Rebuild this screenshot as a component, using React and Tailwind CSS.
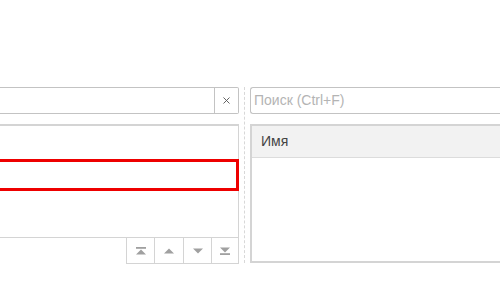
import { X } from 'lucide-react';

const font = { fontFamily: '"Liberation Sans", Arial, sans-serif' };

const Arrow = ({ kind }) => (
    <svg width="12" height="10" viewBox="0 0 12 10" className="fill-[#a0a0a0]">
        {kind === 'top' && (
            <>
                <rect x="1" y="1" width="10" height="1.8" />
                <polygon points="1,8.5 11,8.5 6,3.5" />
            </>
        )}
        {kind === 'up' && <polygon points="1,7.5 11,7.5 6,2.5" />}
        {kind === 'down' && <polygon points="1,2.5 11,2.5 6,7.5" />}
        {kind === 'bottom' && (
            <>
                <polygon points="1,1.5 11,1.5 6,6.5" />
                <rect x="1" y="7.2" width="10" height="1.8" />
            </>
        )}
    </svg>
);

export default function App() {
    return (
        <div className="w-[500px] h-[300px] bg-white overflow-hidden text-[14px]" style={font}>
            <div className="flex pt-[87px]">
                {/* Left column */}
                <div className="w-[239px] shrink-0 flex flex-col">
                    <div className="h-[27px] flex border-y border-r border-[#c3c3c3] rounded-r-[2px]">
                        <div className="flex-1" />
                        <div className="w-[24px] border-l border-[#c3c3c3] flex items-center justify-center text-[#555]">
                            <X className="w-[11px] h-[11px]" strokeWidth={2} />
                        </div>
                    </div>
                    <div className="mt-[10px] h-[114px] border-t-2 border-r border-b border-[#d4d4d4] pt-[33px]">
                        <div className="h-[32px] -mr-[1px] border-[3px] border-l-0 border-[#ee0000]" />
                    </div>
                    <div className="flex justify-end">
                        <div className="flex border-x border-b border-[#d4d4d4] h-[26px]">
                            <div className="w-[27px] flex items-center justify-center"><Arrow kind="top" /></div>
                            <div className="w-[29px] border-l border-[#d4d4d4] flex items-center justify-center"><Arrow kind="up" /></div>
                            <div className="w-[28px] border-l border-[#d4d4d4] flex items-center justify-center"><Arrow kind="down" /></div>
                            <div className="w-[27px] border-l border-[#d4d4d4] flex items-center justify-center"><Arrow kind="bottom" /></div>
                        </div>
                    </div>
                </div>

                {/* Splitter */}
                <div className="w-[11px] shrink-0 flex justify-center">
                    <div className="h-[176px] border-l border-dashed border-[#d8d8d8]" />
                </div>

                {/* Right column */}
                <div className="w-[260px] shrink-0 flex flex-col">
                    <div className="h-[27px] border-y border-l border-[#c3c3c3] rounded-l-[3px] flex items-center pl-[3px] text-[#b4b4b4]">
                        Поиск (Ctrl+F)
                    </div>
                    <div className="mt-[10px] h-[139px] border-t-2 border-l-2 border-b-2 border-[#d4d4d4]">
                        <div className="h-[32px] bg-[#f2f2f2] border-b border-[#dcdcdc] flex items-center pl-[9px] text-[#444]">
                            Имя
                        </div>
                    </div>
                </div>
            </div>
        </div>
    );
}
